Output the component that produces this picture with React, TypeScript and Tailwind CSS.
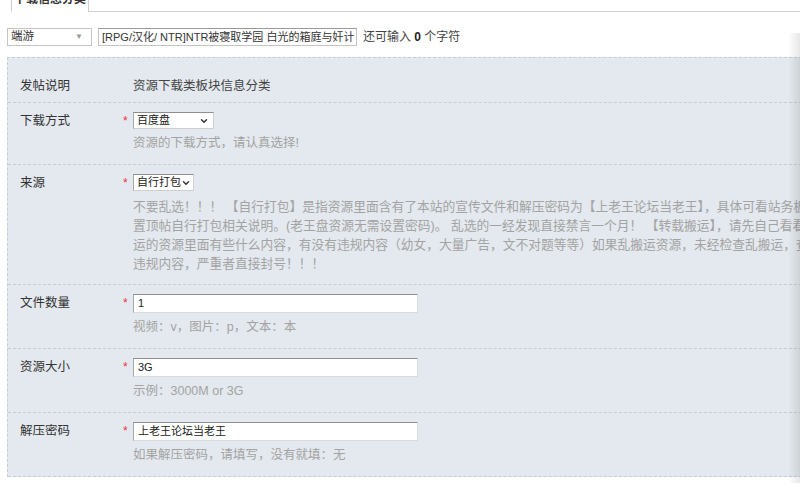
import { ChevronDown } from 'lucide-react'

const font = { fontFamily: '"Liberation Sans", "Noto Sans CJK SC", sans-serif' }

function Star() {
  return <span className="w-[12px] shrink-0 text-[#e33] text-[12px] leading-[19px] pl-[2px]">*</span>
}

function FakeSelect({ text, width }: { text: string; width: string }) {
  return (
    <div
      className={`${width} h-[17px] bg-white border border-[#cfcfcf] border-t-[#8e8e8e] border-l-[#a8a8a8] flex items-center justify-between pl-[3px] pr-[4px] text-[11px] text-[#222] whitespace-nowrap`}
    >
      <span className="leading-none">{text}</span>
      <ChevronDown size={10} strokeWidth={3.5} className="text-[#333] shrink-0" />
    </div>
  )
}

function TextInput({ value }: { value: string }) {
  return (
    <div className="w-[285px] h-[19px] bg-white border border-[#dcdcdc] border-t-[#8e8e8e] border-l-[#a8a8a8] flex items-center pl-[4px] text-[11px] text-[#222]">
      {value}
    </div>
  )
}

function Row({ label, children }: { label: string; children: React.ReactNode }) {
  return (
    <div className="flex border-b border-dashed border-[#c5cdd5] pt-[9px] pb-[11px]">
      <div className="w-[113px] pl-[12px] shrink-0 text-[12.5px] leading-[19px] text-[#333]">{label}</div>
      {children}
    </div>
  )
}

function Hint({ children }: { children: React.ReactNode }) {
  return <div className="mt-[4px] text-[12.5px] leading-[20px] text-[#a3a3a3] whitespace-nowrap">{children}</div>
}

export default function App() {
  const notes = [
    '不要乱选！！！ 【自行打包】是指资源里面含有了本站的宣传文件和解压密码为【上老王论坛当老王】，具体可看站务板块',
    '置顶帖自行打包相关说明。(老王盘资源无需设置密码)。 乱选的一经发现直接禁言一个月！ 【转载搬运】，请先自己看看搬',
    '运的资源里面有些什么内容，有没有违规内容（幼女，大量广告，文不对题等等）如果乱搬运资源，未经检查乱搬运，查出',
    '违规内容，严重者直接封号！！！',
  ]

  return (
    <div className="relative w-[800px] h-[483px] overflow-hidden bg-white" style={font}>
      {/* tab strip */}
      <div className="flex h-[12px]">
        <div className="w-[11px]" />
        <div className="w-[78px] h-[12px] bg-white border-l border-r border-[#cfcfcf] overflow-hidden">
          <div className="-mt-[9px] text-center text-[12px] leading-[16px] text-[#333] font-bold">下载信息分类</div>
        </div>
        <div className="flex-1 border-b border-[#cfcfcf]" />
      </div>

      {/* subject row */}
      <div className="flex items-center mt-[16px] pl-[7px] h-[18px]">
        <div className="w-[85px] h-[18px] border border-[#c4c4c4] flex items-center justify-between pl-[3px] pr-[8px] text-[11.5px] text-[#333]">
          <span>端游</span>
          <span className="text-[8px] text-[#999]">▼</span>
        </div>
        <div className="ml-[6px] w-[259px] h-[18px] border border-[#c4c4c4] border-t-[#9a9a9a] flex items-center pl-[3px] text-[11px] text-[#333] overflow-hidden whitespace-nowrap">
          [RPG/汉化/ NTR]NTR被寝取学园 白光的箱庭与奸计 -被迫
        </div>
        <div className="ml-[6px] text-[12px] text-[#444]">
          还可输入 <b className="text-[#222]">0</b> 个字符
        </div>
      </div>

      {/* form panel */}
      <div className="ml-[7px] mt-[11px] w-[820px] bg-[#e3e9ee] border-l border-t border-dashed border-[#c5cdd5] pt-[10px]">
        <div className="flex border-b border-dashed border-[#c5cdd5] pt-[8px] pb-[6px]">
          <div className="w-[113px] pl-[12px] shrink-0 text-[12.5px] leading-[20px] text-[#333]">发帖说明</div>
          <div className="pl-[12px] text-[12.5px] leading-[20px] text-[#444]">资源下载类板块信息分类</div>
        </div>

        <Row label="下载方式">
          <Star />
          <div>
            <FakeSelect text="百度盘" width="w-[81px]" />
            <Hint>资源的下载方式，请认真选择!</Hint>
          </div>
        </Row>

        <Row label="来源">
          <Star />
          <div>
            <FakeSelect text="自行打包" width="w-[61px]" />
            <div className="mt-[6px] text-[12.75px] leading-[19px] text-[#a3a3a3]">
              {notes.map((l, i) => (
                <div key={i} className="whitespace-nowrap">{l}</div>
              ))}
            </div>
          </div>
        </Row>

        <Row label="文件数量">
          <Star />
          <div>
            <TextInput value="1" />
            <Hint>视频：v，图片：p，文本：本</Hint>
          </div>
        </Row>

        <Row label="资源大小">
          <Star />
          <div>
            <TextInput value="3G" />
            <Hint>示例：3000M or 3G</Hint>
          </div>
        </Row>

        <Row label="解压密码">
          <Star />
          <div>
            <TextInput value="上老王论坛当老王" />
            <Hint>如果解压密码，请填写，没有就填：无</Hint>
          </div>
        </Row>
      </div>

      {/* right edge shade */}
      <div className="absolute top-[33px] right-0 bottom-0 w-[12px] bg-gradient-to-r from-transparent to-[#00000018]" />
    </div>
  )
}
